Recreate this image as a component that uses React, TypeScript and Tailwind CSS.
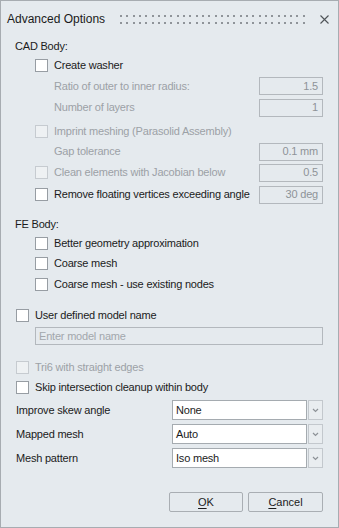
import React from "react";

type BoxProps = { disabled?: boolean };

const CheckBox = ({ disabled }: BoxProps) => (
    <span
        className={`w-[13px] h-[13px] shrink-0 border ${
            disabled
                ? "border-[#c6cbd0] bg-[#eef1f3]"
                : "border-[#979da3] bg-white"
        }`}
    />
);

const ValueBox = ({ value }: { value: string }) => (
    <div className="w-[64px] h-[18px] border border-[#b3b8bd] flex items-center justify-end pr-[4px] text-[#8e9398]">
        {value}
    </div>
);

type RowProps = {
    label: string;
    disabled?: boolean;
    check?: boolean;
    indent?: boolean;
    value?: string;
    h: string;
};

const Row = ({ label, disabled, check, indent, value, h }: RowProps) => (
    <div className={`flex items-center ${h}`}>
        <div
            className={`flex items-center gap-[6px] ${
                indent ? (check ? "pl-[20px]" : "pl-[39px]") : "pl-[1px]"
            }`}
        >
            {check && <CheckBox disabled={disabled} />}
            <span className={disabled ? "text-[#9ca1a6]" : "text-[#1b1b1b]"}>
                {label}
            </span>
        </div>
        {value && (
            <div className="ml-auto">
                <ValueBox value={value} />
            </div>
        )}
    </div>
);

const Select = ({ label, value }: { label: string; value: string }) => (
    <div className="flex items-center h-[20px]">
        <span className="pl-[1px]">{label}</span>
        <div className="ml-auto flex gap-[1px] h-[20px]">
            <div className="w-[135px] h-full bg-white border border-[#a5abb0] flex items-center pl-[3px]">
                {value}
            </div>
            <div className="w-[15px] h-full border border-[#c3c8cd] bg-[#e9edf0] flex items-center justify-center">
                <svg width="7" height="5" viewBox="0 0 7 5">
                    <polyline
                        points="1,1 3.5,3.5 6,1"
                        fill="none"
                        stroke="#8d9297"
                        strokeWidth="1.2"
                    />
                </svg>
            </div>
        </div>
    </div>
);

const Dots = () => {
    const xs = Array.from({ length: 30 }, (_, i) => Math.round(i * 6.3));
    return (
        <svg width="188" height="9" viewBox="0 0 188 9">
            {xs.map((x) => (
                <g key={x}>
                    <rect x={x} y="0" width="2" height="2" fill="#8f9499" />
                    <rect x={x} y="7" width="2" height="2" fill="#8f9499" />
                </g>
            ))}
        </svg>
    );
};

export default function App() {
    return (
        <div className="w-[339px] h-[528px] border border-[#a7acb1] bg-[#e5eaee] flex flex-col font-['Liberation_Sans',Arial,sans-serif] text-[11px] tracking-[-0.2px] text-[#1b1b1b]">
            {/* Title bar */}
            <div className="h-[36px] shrink-0 flex items-center pl-[6px]">
                <span className="w-[113px] text-[12px] tracking-normal text-[#1a1a1a]">
                    Advanced Options
                </span>
                <Dots />
                <svg width="9" height="9" viewBox="0 0 9 9" className="ml-[12px]">
                    <path d="M0.5 0.5 L8.5 8.5 M8.5 0.5 L0.5 8.5" stroke="#4f5458" strokeWidth="1.1" />
                </svg>
            </div>

            <div className="flex flex-col pl-[14px] pr-[15px]">
                {/* CAD body */}
                <div className="h-[18px] flex items-center">CAD Body:</div>
                <Row h="h-[20px]" check indent label="Create washer" />
                <Row h="h-[22px]" indent disabled label="Ratio of outer to inner radius:" value="1.5" />
                <Row h="h-[21px]" indent disabled label="Number of layers" value="1" />
                <Row h="h-[21px] mt-[3px]" check indent disabled label="Imprint meshing (Parasolid Assembly)" />
                <Row h="h-[19px]" indent disabled label="Gap tolerance" value="0.1 mm" />
                <Row h="h-[23px]" check indent disabled label="Clean elements with Jacobian below" value="0.5" />
                <Row h="h-[21px]" check indent label="Remove floating vertices exceeding angle" value="30 deg" />

                {/* FE body */}
                <div className="h-[19px] mt-[10px] flex items-center">FE Body:</div>
                <Row h="h-[19px]" check indent label="Better geometry approximation" />
                <Row h="h-[21px]" check indent label="Coarse mesh" />
                <Row h="h-[21px]" check indent label="Coarse mesh - use existing nodes" />

                {/* Model name */}
                <Row h="h-[20px] mt-[10px]" check label="User defined model name" />
                <div className="mt-[2px] ml-[20px] h-[18px] border border-[#b3b8bd] flex items-center pl-[3px] text-[#a2a7ac]">
                    Enter model name
                </div>

                <Row h="h-[20px] mt-[12px]" check disabled label="Tri6 with straight edges" />
                <Row h="h-[20px]" check label="Skip intersection cleanup within body" />

                {/* Dropdowns */}
                <div className="mt-[3px] flex flex-col gap-[4px]">
                    <Select label="Improve skew angle" value="None" />
                    <Select label="Mapped mesh" value="Auto" />
                    <Select label="Mesh pattern" value="Iso mesh" />
                </div>

                {/* Buttons */}
                <div className="mt-[24px] flex justify-end gap-[5px]">
                    <button className="w-[74px] h-[20px] border border-[#a9aeb3] rounded-[2px] bg-[#e5eaee] tracking-normal">
                        <span className="underline underline-offset-2">O</span>K
                    </button>
                    <button className="w-[75px] h-[20px] border border-[#a9aeb3] rounded-[2px] bg-[#e5eaee] tracking-normal">
                        <span className="underline underline-offset-2">C</span>ancel
                    </button>
                </div>
            </div>
        </div>
    );
}
